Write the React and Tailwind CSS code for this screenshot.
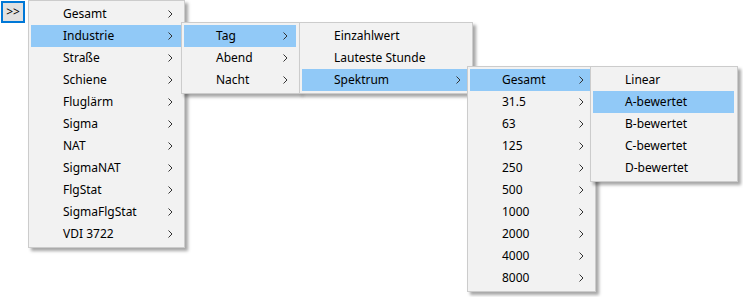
import React from "react";

const Chevron = () => (
  <svg width="5" height="8" viewBox="0 0 5 8" className="block">
    <polyline points="0.5,0.5 4,4 0.5,7.5" fill="none" stroke="#333" strokeWidth="1" />
  </svg>
);

function Menu({ left, top, width, items, active, arrows = true, arrowItems }) {
  return (
    <div
      className="absolute border border-[#cccccc] bg-[#f2f2f2] p-[2px] shadow-[3px_3px_3px_rgba(0,0,0,0.35)]"
      style={{ left, top, width }}
    >
      <div className="flex flex-col pr-[1px]">
        {items.map((it) => {
          const hasArrow = arrowItems ? arrowItems.includes(it) : arrows;
          return (
            <div
              key={it}
              className={`flex h-[22px] items-center pl-[32px] pr-[8px] ${it === active ? "bg-[#91c9f7]" : ""}`}
            >
              <span className="flex-1 whitespace-nowrap text-[12px] text-black">{it}</span>
              {hasArrow && <Chevron />}
            </div>
          );
        })}
      </div>
    </div>
  );
}

export default function App() {
  return (
    <div
      className="relative h-[297px] w-[743px] overflow-hidden bg-white"
      style={{ fontFamily: '"Segoe UI", "Noto Sans", "Open Sans", sans-serif' }}
    >
      <div className="absolute left-[1px] top-[1px] flex h-[22px] w-[24px] items-center justify-center border-2 border-[#0078d7] bg-[#e1e1e1] text-[12px] text-black">
        &gt;&gt;
      </div>
      <Menu
        left={28}
        top={0}
        width={157}
        active="Industrie"
        items={["Gesamt", "Industrie", "Straße", "Schiene", "Fluglärm", "Sigma", "NAT", "SigmaNAT", "FlgStat", "SigmaFlgStat", "VDI 3722"]}
      />
      <Menu left={181} top={22} width={119} active="Tag" items={["Tag", "Abend", "Nacht"]} />
      <Menu
        left={299}
        top={22}
        width={174}
        active="Spektrum"
        items={["Einzahlwert", "Lauteste Stunde", "Spektrum"]}
        arrowItems={["Spektrum"]}
      />
      <Menu
        left={467}
        top={66}
        width={129}
        active="Gesamt"
        items={["Gesamt", "31.5", "63", "125", "250", "500", "1000", "2000", "4000", "8000"]}
      />
      <Menu
        left={590}
        top={66}
        width={148}
        active="A-bewertet"
        items={["Linear", "A-bewertet", "B-bewertet", "C-bewertet", "D-bewertet"]}
        arrows={false}
      />
    </div>
  );
}
